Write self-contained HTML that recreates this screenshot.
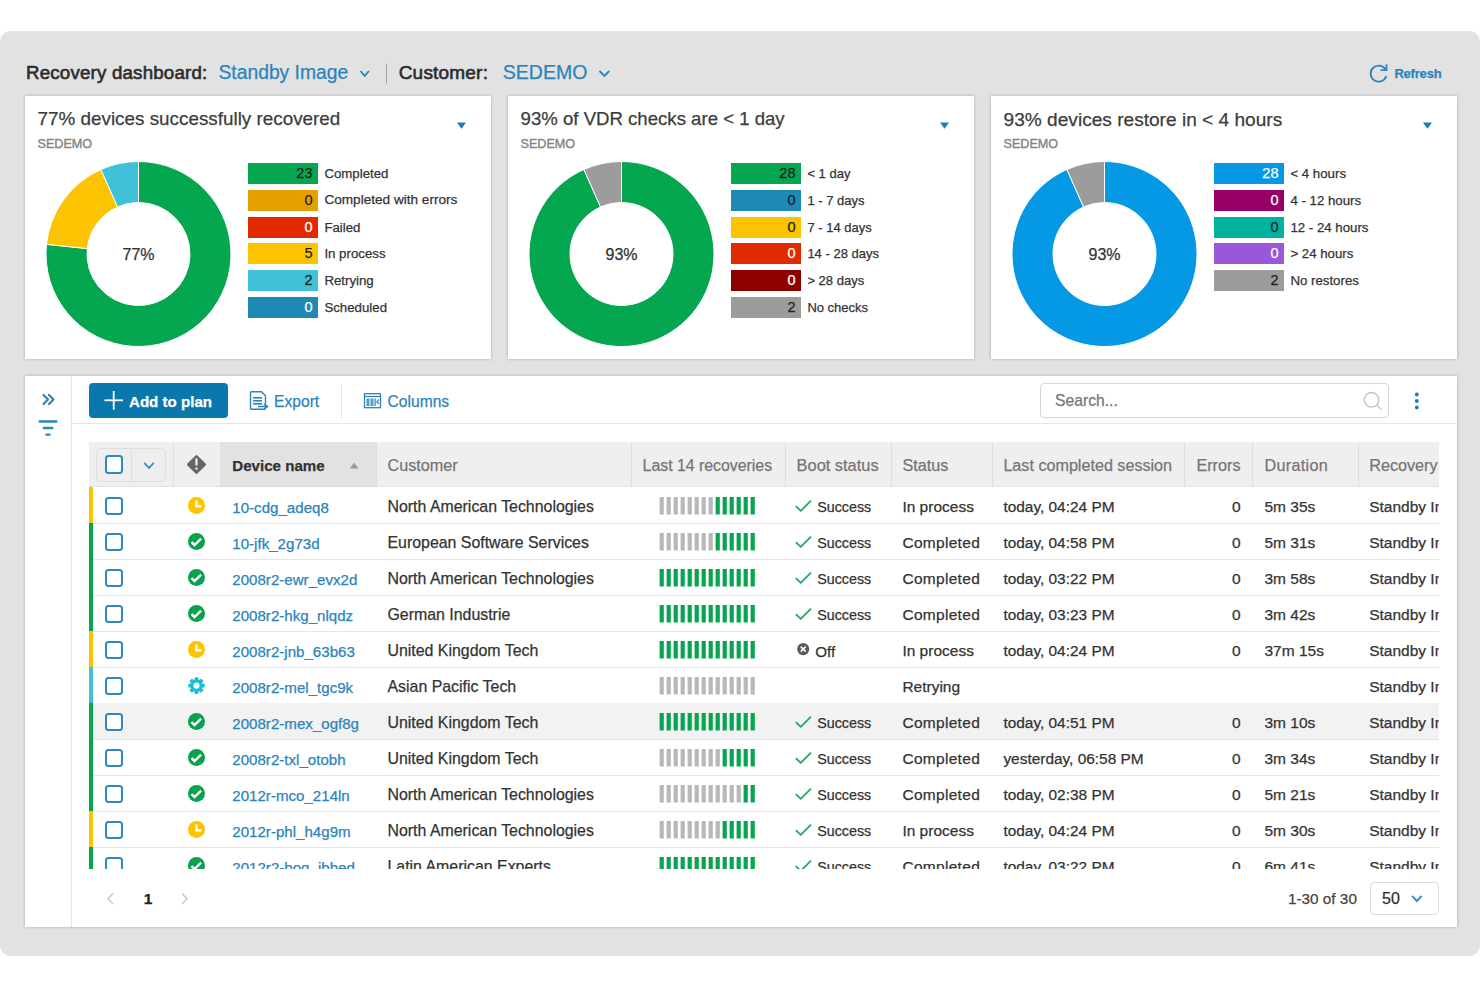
<!DOCTYPE html><html><head><meta charset="utf-8"><style>
html,body{margin:0;padding:0;background:#fff;width:1480px;height:987px;overflow:hidden;font-family:"Liberation Sans",sans-serif;}
.a{position:absolute;box-sizing:border-box}
.t{position:absolute;line-height:1;white-space:nowrap;-webkit-text-stroke:0.25px currentColor}
svg{position:absolute;overflow:visible}
</style></head><body>
<div class="a" style="left:0px;top:31px;width:1480px;height:925px;background:#e2e2e2;border-radius:11px"></div>
<div class="t" style="left:26.0px;top:63.6px;font-size:18.7px;color:#2c2c2c;font-weight:400;-webkit-text-stroke:0.6px #2c2c2c;letter-spacing:0.2px">Recovery dashboard:</div>
<div class="t" style="left:218.5px;top:63.4px;font-size:19.3px;color:#2b84bb;font-weight:400;">Standby Image</div>
<svg style="left:0;top:0" width="1480" height="987"><polyline points="360.5,71 364.7,75.8 369,71" fill="none" stroke="#2b84bb" stroke-width="1.8"/><polyline points="599.5,71 604.4,76 609.3,71" fill="none" stroke="#2b84bb" stroke-width="1.8"/><line x1="386.5" y1="63.5" x2="386.5" y2="83.5" stroke="#a0a0a0" stroke-width="1"/></svg>
<div class="t" style="left:398.7px;top:63.3px;font-size:19.0px;color:#2c2c2c;font-weight:400;-webkit-text-stroke:0.6px #2c2c2c;letter-spacing:0.2px">Customer:</div>
<div class="t" style="left:502.8px;top:63.2px;font-size:19.5px;color:#2b84bb;font-weight:400;">SEDEMO</div>
<svg style="left:0;top:0" width="1480" height="987"><path d="M1385.5,69.5 A8,8 0 1 0 1386.3,76" fill="none" stroke="#2b84bb" stroke-width="1.8"/><path d="M1380.5,70.2 L1386.5,70.2 L1386.5,64.2" fill="none" stroke="#2b84bb" stroke-width="1.8"/></svg>
<div class="t" style="left:1394.4px;top:66.7px;font-size:13px;color:#2b84bb;font-weight:700;letter-spacing:-0.2px">Refresh</div>
<div class="a" style="left:25px;top:96px;width:466px;height:263px;background:#fff;box-shadow:0 0 3px rgba(0,0,0,.25)"></div>
<div class="t" style="left:37.6px;top:109.7px;font-size:18.85px;color:#3c3c3c;font-weight:400;">77% devices successfully recovered</div>
<div class="t" style="left:37.5px;top:137.6px;font-size:12.6px;color:#858585;font-weight:400;-webkit-text-stroke:0.4px #858585">SEDEMO</div>
<div class="t" style="left:38.5px;width:200px;text-align:center;top:247.1px;font-size:16px;color:#333;font-weight:400;">77%</div>
<div class="a" style="left:248px;top:163px;width:70px;height:21px;background:#05a650"></div>
<div class="t" style="right:1167.5px;top:165.9px;font-size:14.5px;color:#222;font-weight:400;">23</div>
<div class="t" style="left:324.4px;top:166.5px;font-size:13.25px;color:#333;font-weight:400;">Completed</div>
<div class="a" style="left:248px;top:190px;width:70px;height:21px;background:#e5a000"></div>
<div class="t" style="right:1167.5px;top:192.9px;font-size:14.5px;color:#222;font-weight:400;">0</div>
<div class="t" style="left:324.4px;top:193.2px;font-size:13.6px;color:#333;font-weight:400;">Completed with errors</div>
<div class="a" style="left:248px;top:217px;width:70px;height:21px;background:#e02b00"></div>
<div class="t" style="right:1167.5px;top:219.9px;font-size:14.5px;color:#fff;font-weight:400;">0</div>
<div class="t" style="left:324.4px;top:220.5px;font-size:13.25px;color:#333;font-weight:400;">Failed</div>
<div class="a" style="left:248px;top:243px;width:70px;height:21px;background:#fcc300"></div>
<div class="t" style="right:1167.5px;top:245.9px;font-size:14.5px;color:#222;font-weight:400;">5</div>
<div class="t" style="left:324.4px;top:246.5px;font-size:13.25px;color:#333;font-weight:400;">In process</div>
<div class="a" style="left:248px;top:270px;width:70px;height:21px;background:#41c1d7"></div>
<div class="t" style="right:1167.5px;top:272.9px;font-size:14.5px;color:#222;font-weight:400;">2</div>
<div class="t" style="left:324.4px;top:273.5px;font-size:13.25px;color:#333;font-weight:400;">Retrying</div>
<div class="a" style="left:248px;top:297px;width:70px;height:21px;background:#1f89b5"></div>
<div class="t" style="right:1167.5px;top:299.9px;font-size:14.5px;color:#fff;font-weight:400;">0</div>
<div class="t" style="left:324.4px;top:300.5px;font-size:13.25px;color:#333;font-weight:400;">Scheduled</div>
<div class="a" style="left:508px;top:96px;width:466px;height:263px;background:#fff;box-shadow:0 0 3px rgba(0,0,0,.25)"></div>
<div class="t" style="left:520.6px;top:110.0px;font-size:18.6px;color:#3c3c3c;font-weight:400;">93% of VDR checks are &lt; 1 day</div>
<div class="t" style="left:520.5px;top:137.6px;font-size:12.6px;color:#858585;font-weight:400;-webkit-text-stroke:0.4px #858585">SEDEMO</div>
<div class="t" style="left:521.5px;width:200px;text-align:center;top:247.1px;font-size:16px;color:#333;font-weight:400;">93%</div>
<div class="a" style="left:731px;top:163px;width:70px;height:21px;background:#05a650"></div>
<div class="t" style="right:684.5px;top:165.9px;font-size:14.5px;color:#222;font-weight:400;">28</div>
<div class="t" style="left:807.4px;top:166.7px;font-size:13.0px;color:#333;font-weight:400;">&lt; 1 day</div>
<div class="a" style="left:731px;top:190px;width:70px;height:21px;background:#1f89b5"></div>
<div class="t" style="right:684.5px;top:192.9px;font-size:14.5px;color:#222;font-weight:400;">0</div>
<div class="t" style="left:807.4px;top:193.7px;font-size:13.0px;color:#333;font-weight:400;">1 - 7 days</div>
<div class="a" style="left:731px;top:217px;width:70px;height:21px;background:#fcc300"></div>
<div class="t" style="right:684.5px;top:219.9px;font-size:14.5px;color:#222;font-weight:400;">0</div>
<div class="t" style="left:807.4px;top:220.7px;font-size:13.0px;color:#333;font-weight:400;">7 - 14 days</div>
<div class="a" style="left:731px;top:243px;width:70px;height:21px;background:#e02b00"></div>
<div class="t" style="right:684.5px;top:245.9px;font-size:14.5px;color:#fff;font-weight:400;">0</div>
<div class="t" style="left:807.4px;top:246.7px;font-size:13.0px;color:#333;font-weight:400;">14 - 28 days</div>
<div class="a" style="left:731px;top:270px;width:70px;height:21px;background:#8e0000"></div>
<div class="t" style="right:684.5px;top:272.9px;font-size:14.5px;color:#fff;font-weight:400;">0</div>
<div class="t" style="left:807.4px;top:273.7px;font-size:13.0px;color:#333;font-weight:400;">&gt; 28 days</div>
<div class="a" style="left:731px;top:297px;width:70px;height:21px;background:#9c9c9c"></div>
<div class="t" style="right:684.5px;top:299.9px;font-size:14.5px;color:#222;font-weight:400;">2</div>
<div class="t" style="left:807.4px;top:300.7px;font-size:13.0px;color:#333;font-weight:400;">No checks</div>
<div class="a" style="left:991px;top:96px;width:466px;height:263px;background:#fff;box-shadow:0 0 3px rgba(0,0,0,.25)"></div>
<div class="t" style="left:1003.6px;top:109.5px;font-size:19.1px;color:#3c3c3c;font-weight:400;">93% devices restore in &lt; 4 hours</div>
<div class="t" style="left:1003.5px;top:137.6px;font-size:12.6px;color:#858585;font-weight:400;-webkit-text-stroke:0.4px #858585">SEDEMO</div>
<div class="t" style="left:1004.5px;width:200px;text-align:center;top:247.1px;font-size:16px;color:#333;font-weight:400;">93%</div>
<div class="a" style="left:1214px;top:163px;width:70px;height:21px;background:#0599e5"></div>
<div class="t" style="right:201.5px;top:165.9px;font-size:14.5px;color:#fff;font-weight:400;">28</div>
<div class="t" style="left:1290.4px;top:166.5px;font-size:13.25px;color:#333;font-weight:400;">&lt; 4 hours</div>
<div class="a" style="left:1214px;top:190px;width:70px;height:21px;background:#990066"></div>
<div class="t" style="right:201.5px;top:192.9px;font-size:14.5px;color:#fff;font-weight:400;">0</div>
<div class="t" style="left:1290.4px;top:193.5px;font-size:13.25px;color:#333;font-weight:400;">4 - 12 hours</div>
<div class="a" style="left:1214px;top:217px;width:70px;height:21px;background:#00b39e"></div>
<div class="t" style="right:201.5px;top:219.9px;font-size:14.5px;color:#222;font-weight:400;">0</div>
<div class="t" style="left:1290.4px;top:220.5px;font-size:13.25px;color:#333;font-weight:400;">12 - 24 hours</div>
<div class="a" style="left:1214px;top:243px;width:70px;height:21px;background:#9b57d9"></div>
<div class="t" style="right:201.5px;top:245.9px;font-size:14.5px;color:#fff;font-weight:400;">0</div>
<div class="t" style="left:1290.4px;top:246.5px;font-size:13.25px;color:#333;font-weight:400;">&gt; 24 hours</div>
<div class="a" style="left:1214px;top:270px;width:70px;height:21px;background:#9c9c9c"></div>
<div class="t" style="right:201.5px;top:272.9px;font-size:14.5px;color:#222;font-weight:400;">2</div>
<div class="t" style="left:1290.4px;top:273.5px;font-size:13.25px;color:#333;font-weight:400;">No restores</div>
<svg style="left:0;top:0" width="1480" height="987"><polygon points="457,122.5 466,122.5 461.5,128.7" fill="#1a7db3"/><path d="M138.50,161.50 A92.5,92.5 0 1 1 46.51,244.33 L87.28,248.62 A51.5,51.5 0 1 0 138.50,202.50 Z" fill="#05a650" stroke="#fff" stroke-width="1"/><path d="M46.51,244.33 A92.5,92.5 0 0 1 100.88,169.50 L117.55,206.95 A51.5,51.5 0 0 0 87.28,248.62 Z" fill="#fcc300" stroke="#fff" stroke-width="1"/><path d="M100.88,169.50 A92.5,92.5 0 0 1 138.50,161.50 L138.50,202.50 A51.5,51.5 0 0 0 117.55,206.95 Z" fill="#41c1d7" stroke="#fff" stroke-width="1"/><polygon points="940,122.5 949,122.5 944.5,128.7" fill="#1a7db3"/><path d="M621.50,161.50 A92.5,92.5 0 1 1 583.88,169.50 L600.55,206.95 A51.5,51.5 0 1 0 621.50,202.50 Z" fill="#05a650" stroke="#fff" stroke-width="1"/><path d="M583.88,169.50 A92.5,92.5 0 0 1 621.50,161.50 L621.50,202.50 A51.5,51.5 0 0 0 600.55,206.95 Z" fill="#9c9c9c" stroke="#fff" stroke-width="1"/><polygon points="1423,122.5 1432,122.5 1427.5,128.7" fill="#1a7db3"/><path d="M1104.50,161.50 A92.5,92.5 0 1 1 1066.88,169.50 L1083.55,206.95 A51.5,51.5 0 1 0 1104.50,202.50 Z" fill="#0599e5" stroke="#fff" stroke-width="1"/><path d="M1066.88,169.50 A92.5,92.5 0 0 1 1104.50,161.50 L1104.50,202.50 A51.5,51.5 0 0 0 1083.55,206.95 Z" fill="#9c9c9c" stroke="#fff" stroke-width="1"/></svg>
<div class="a" style="left:25px;top:376px;width:1432px;height:551px;background:#fff;box-shadow:0 0 3px rgba(0,0,0,.25)"></div>
<div class="a" style="left:71px;top:376px;width:1px;height:551px;background:#e6e6e6"></div>
<div class="a" style="left:72px;top:422.5px;width:1385px;height:1px;background:#e6e6e6"></div>
<div class="a" style="left:89px;top:383px;width:139px;height:35px;background:#0a77ad;border-radius:4px"></div>
<div class="t" style="left:129.0px;top:393.7px;font-size:15.1px;color:#fff;font-weight:700;">Add to plan</div>
<div class="t" style="left:274.1px;top:393.6px;font-size:15.6px;color:#2b84bb;font-weight:400;">Export</div>
<div class="a" style="left:341px;top:384px;width:1px;height:34px;background:#e3e3e3"></div>
<div class="t" style="left:387.6px;top:393.6px;font-size:15.6px;color:#2b84bb;font-weight:400;">Columns</div>
<div class="a" style="left:1040px;top:383px;width:349px;height:35px;border:1px solid #d6d6d6;border-radius:4px;background:#fff"></div>
<div class="t" style="left:1055.0px;top:392.8px;font-size:15.7px;color:#767676;font-weight:400;">Search...</div>
<svg style="left:0;top:0" width="1480" height="987"><polyline points="43.5,395 48,399.5 43.5,404" fill="none" stroke="#2b84bb" stroke-width="2.2" stroke-linecap="round" stroke-linejoin="round"/><polyline points="49,395 53.5,399.5 49,404" fill="none" stroke="#2b84bb" stroke-width="2.2" stroke-linecap="round" stroke-linejoin="round"/><line x1="39.8" y1="421.5" x2="56.3" y2="421.5" stroke="#2b84bb" stroke-width="2.4" stroke-linecap="round"/><line x1="43.8" y1="428" x2="52.3" y2="428" stroke="#2b84bb" stroke-width="2.4" stroke-linecap="round"/><line x1="46.5" y1="434.6" x2="49.5" y2="434.6" stroke="#2b84bb" stroke-width="2.4" stroke-linecap="round"/><line x1="104.5" y1="400.3" x2="123" y2="400.3" stroke="#fff" stroke-width="1.8"/><line x1="113.7" y1="391" x2="113.7" y2="409.7" stroke="#fff" stroke-width="1.8"/><path d="M250.5,391.8 H261.5 L265.5,395.8 V404 M265.5,409.3 H250.5 Z" fill="none" stroke="#2b84bb" stroke-width="1.4"/><path d="M250.5,391.8 V409.3" stroke="#2b84bb" stroke-width="1.4"/><rect x="253" y="397" width="9" height="1.6" fill="#2b84bb"/><rect x="253" y="400" width="9" height="1.6" fill="#2b84bb"/><rect x="253" y="403" width="9" height="1.6" fill="#2b84bb"/><path d="M258,406.5 H266 M264,403.8 L267.5,406.5 L264,409.2" fill="none" stroke="#2b84bb" stroke-width="1.6"/><rect x="364.5" y="393.7" width="16" height="14" fill="none" stroke="#2b84bb" stroke-width="1.3"/><line x1="364.5" y1="396.5" x2="380.5" y2="396.5" stroke="#2b84bb" stroke-width="1.2"/><rect x="366.5" y="398.5" width="3" height="7.5" fill="#2b84bb" opacity=".8"/><rect x="370.5" y="398.5" width="3" height="7.5" fill="#2b84bb" opacity=".8"/><rect x="374.5" y="398.5" width="1.2" height="7.5" fill="#2b84bb"/><polyline points="379,399.5 376.8,401.7 379,404" fill="none" stroke="#2b84bb" stroke-width="1.1"/><circle cx="1371.5" cy="399.8" r="7.3" fill="none" stroke="#c4c4c4" stroke-width="1.4"/><line x1="1376.8" y1="405.2" x2="1381.5" y2="409.5" stroke="#c4c4c4" stroke-width="1.4"/><circle cx="1416.8" cy="394.5" r="1.9" fill="#1a7db3"/><circle cx="1416.8" cy="401" r="1.9" fill="#1a7db3"/><circle cx="1416.8" cy="407.5" r="1.9" fill="#1a7db3"/></svg>
<div class="a" style="left:89px;top:442px;width:1350px;height:45px;background:#efefef;border-bottom:1px solid #e2e2e2"></div>
<div class="a" style="left:220px;top:442px;width:156px;height:45px;background:#e2e2e2;border-bottom:1px solid #dadada"></div>
<div class="a" style="left:173px;top:442px;width:1px;height:45px;background:#dedede"></div>
<div class="a" style="left:376px;top:442px;width:1px;height:45px;background:#dedede"></div>
<div class="a" style="left:631px;top:442px;width:1px;height:45px;background:#dedede"></div>
<div class="a" style="left:785px;top:442px;width:1px;height:45px;background:#dedede"></div>
<div class="a" style="left:891px;top:442px;width:1px;height:45px;background:#dedede"></div>
<div class="a" style="left:992px;top:442px;width:1px;height:45px;background:#dedede"></div>
<div class="a" style="left:1184px;top:442px;width:1px;height:45px;background:#dedede"></div>
<div class="a" style="left:1252px;top:442px;width:1px;height:45px;background:#dedede"></div>
<div class="a" style="left:1358px;top:442px;width:1px;height:45px;background:#dedede"></div>
<div class="a" style="left:95.5px;top:447.5px;width:70px;height:34px;border:1px solid #dedede;border-radius:5px;background:#eeeeee"></div>
<div class="a" style="left:131px;top:448px;width:1px;height:33px;background:#e0e0e0"></div>
<div class="a" style="left:104.7px;top:455.1px;width:18.4px;height:18.9px;border:2.2px solid #2e89bf;border-radius:3.5px;background:#fff"></div>
<svg style="left:0;top:0" width="1480" height="987"><polyline points="144.2,462.8 149,467.8 153.8,462.8" fill="none" stroke="#3a90c4" stroke-width="1.9"/><polygon points="196.5,456.3 204.7,464.5 196.5,472.7 188.3,464.5" fill="#666" stroke="#666" stroke-width="2.6" stroke-linejoin="round"/><rect x="195.5" y="458.5" width="2" height="7" fill="#fff"/><rect x="195.5" y="467.6" width="2" height="2" fill="#fff"/><polygon points="349.7,468.6 358.6,468.6 354.15,462.7" fill="#999"/></svg>
<div class="t" style="left:232.3px;top:458.2px;font-size:15.1px;color:#333;font-weight:700;">Device name</div>
<div class="t" style="left:387.5px;top:457.3px;font-size:16.2px;color:#757575;font-weight:400;">Customer</div>
<div class="t" style="left:642.6px;top:457.6px;font-size:15.85px;color:#757575;font-weight:400;">Last 14 recoveries</div>
<div class="t" style="left:796.6px;top:457.1px;font-size:16.4px;color:#757575;font-weight:400;">Boot status</div>
<div class="t" style="left:902.4px;top:457.3px;font-size:16.2px;color:#757575;font-weight:400;">Status</div>
<div class="t" style="left:1003.4px;top:457.3px;font-size:16.15px;color:#757575;font-weight:400;">Last completed session</div>
<div class="t" style="right:239.5px;top:457.3px;font-size:16.2px;color:#757575;font-weight:400;">Errors</div>
<div class="t" style="left:1264.5px;top:457.3px;font-size:16.2px;color:#757575;font-weight:400;letter-spacing:0.3px">Duration</div>
<div class="t" style="left:1369.2px;top:457.3px;font-size:16.2px;color:#757575;font-weight:400;">Recovery</div>
<div class="a" style="left:89px;top:487px;width:1350px;height:382px;overflow:hidden"><div class="a" style="left:0px;top:0px;width:4px;height:36px;background:#fcc300"></div><div class="a" style="left:4px;top:36px;width:1346px;height:1px;background:#e6e6e6"></div><div class="a" style="left:15.700000000000003px;top:9.6px;width:18.4px;height:18.9px;border:2.2px solid #2e89bf;border-radius:3.5px;background:#fff"></div><div class="t" style="left:143.3px;top:12.7px;font-size:15.1px;color:#2b84bb;font-weight:400;">10-cdg_adeq8</div><div class="t" style="left:298.5px;top:12.0px;font-size:15.9px;color:#333;font-weight:400;">North American Technologies</div><div class="t" style="left:728.2px;top:13.4px;font-size:14.3px;color:#333;font-weight:400;">Success</div><svg style="left:0;top:0" width="1350" height="420"><circle cx="107.5" cy="18.600000000000023" r="8.5" fill="#fcc300"/><polyline points="107.5,13.600000000000023 107.5,19.400000000000023 112.5,19.400000000000023" fill="none" stroke="#fff" stroke-width="2.2"/><rect x="570.6" y="10" width="4.2" height="17.5" fill="#b8b8b8"/><rect x="577.6" y="10" width="4.2" height="17.5" fill="#b8b8b8"/><rect x="584.6" y="10" width="4.2" height="17.5" fill="#b8b8b8"/><rect x="591.6" y="10" width="4.2" height="17.5" fill="#b8b8b8"/><rect x="598.6" y="10" width="4.2" height="17.5" fill="#b8b8b8"/><rect x="605.6" y="10" width="4.2" height="17.5" fill="#b8b8b8"/><rect x="612.6" y="10" width="4.2" height="17.5" fill="#b8b8b8"/><rect x="619.6" y="10" width="4.2" height="17.5" fill="#b8b8b8"/><rect x="626.6" y="10" width="4.2" height="17.5" fill="#06a550"/><rect x="633.6" y="10" width="4.2" height="17.5" fill="#06a550"/><rect x="640.6" y="10" width="4.2" height="17.5" fill="#06a550"/><rect x="647.6" y="10" width="4.2" height="17.5" fill="#06a550"/><rect x="654.6" y="10" width="4.2" height="17.5" fill="#06a550"/><rect x="661.6" y="10" width="4.2" height="17.5" fill="#06a550"/><polyline points="706.8,19.100000000000023 711.8,23.900000000000023 722,13.600000000000023" fill="none" stroke="#21a35c" stroke-width="1.7"/></svg><div class="t" style="left:813.4px;top:12.4px;font-size:15.5px;color:#333;font-weight:400;">In process</div><div class="t" style="left:914.4px;top:12.4px;font-size:15.43px;color:#333;font-weight:400;">today, 04:24 PM</div><div class="t" style="right:198.5px;top:12.4px;font-size:15.5px;color:#333;font-weight:400;">0</div><div class="t" style="left:1175.5px;top:12.4px;font-size:15.5px;color:#333;font-weight:400;">5m 35s</div><div class="t" style="left:1280.2px;top:12.4px;font-size:15.5px;color:#333;font-weight:400;">Standby Image</div><div class="a" style="left:0px;top:36px;width:4px;height:36px;background:#05a650"></div><div class="a" style="left:4px;top:72px;width:1346px;height:1px;background:#e6e6e6"></div><div class="a" style="left:15.700000000000003px;top:45.6px;width:18.4px;height:18.9px;border:2.2px solid #2e89bf;border-radius:3.5px;background:#fff"></div><div class="t" style="left:143.3px;top:48.7px;font-size:15.1px;color:#2b84bb;font-weight:400;">10-jfk_2g73d</div><div class="t" style="left:298.5px;top:48.0px;font-size:15.9px;color:#333;font-weight:400;">European Software Services</div><div class="t" style="left:728.2px;top:49.4px;font-size:14.3px;color:#333;font-weight:400;">Success</div><svg style="left:0;top:0" width="1350" height="420"><circle cx="107.5" cy="54.60000000000002" r="8.5" fill="#08a14e"/><polyline points="102.5,55.200000000000024 105.5,58.00000000000002 112.1,51.60000000000002" fill="none" stroke="#fff" stroke-width="2.4"/><rect x="570.6" y="46" width="4.2" height="17.5" fill="#b8b8b8"/><rect x="577.6" y="46" width="4.2" height="17.5" fill="#b8b8b8"/><rect x="584.6" y="46" width="4.2" height="17.5" fill="#b8b8b8"/><rect x="591.6" y="46" width="4.2" height="17.5" fill="#b8b8b8"/><rect x="598.6" y="46" width="4.2" height="17.5" fill="#b8b8b8"/><rect x="605.6" y="46" width="4.2" height="17.5" fill="#b8b8b8"/><rect x="612.6" y="46" width="4.2" height="17.5" fill="#b8b8b8"/><rect x="619.6" y="46" width="4.2" height="17.5" fill="#b8b8b8"/><rect x="626.6" y="46" width="4.2" height="17.5" fill="#06a550"/><rect x="633.6" y="46" width="4.2" height="17.5" fill="#06a550"/><rect x="640.6" y="46" width="4.2" height="17.5" fill="#06a550"/><rect x="647.6" y="46" width="4.2" height="17.5" fill="#06a550"/><rect x="654.6" y="46" width="4.2" height="17.5" fill="#06a550"/><rect x="661.6" y="46" width="4.2" height="17.5" fill="#06a550"/><polyline points="706.8,55.10000000000002 711.8,59.90000000000002 722,49.60000000000002" fill="none" stroke="#21a35c" stroke-width="1.7"/></svg><div class="t" style="left:813.4px;top:48.4px;font-size:15.5px;color:#333;font-weight:400;letter-spacing:0.3px">Completed</div><div class="t" style="left:914.4px;top:48.4px;font-size:15.43px;color:#333;font-weight:400;">today, 04:58 PM</div><div class="t" style="right:198.5px;top:48.4px;font-size:15.5px;color:#333;font-weight:400;">0</div><div class="t" style="left:1175.5px;top:48.4px;font-size:15.5px;color:#333;font-weight:400;">5m 31s</div><div class="t" style="left:1280.2px;top:48.4px;font-size:15.5px;color:#333;font-weight:400;">Standby Image</div><div class="a" style="left:0px;top:72px;width:4px;height:36px;background:#05a650"></div><div class="a" style="left:4px;top:108px;width:1346px;height:1px;background:#e6e6e6"></div><div class="a" style="left:15.700000000000003px;top:81.6px;width:18.4px;height:18.9px;border:2.2px solid #2e89bf;border-radius:3.5px;background:#fff"></div><div class="t" style="left:143.3px;top:84.7px;font-size:15.1px;color:#2b84bb;font-weight:400;">2008r2-ewr_evx2d</div><div class="t" style="left:298.5px;top:84.0px;font-size:15.9px;color:#333;font-weight:400;">North American Technologies</div><div class="t" style="left:728.2px;top:85.4px;font-size:14.3px;color:#333;font-weight:400;">Success</div><svg style="left:0;top:0" width="1350" height="420"><circle cx="107.5" cy="90.60000000000002" r="8.5" fill="#08a14e"/><polyline points="102.5,91.20000000000002 105.5,94.00000000000003 112.1,87.60000000000002" fill="none" stroke="#fff" stroke-width="2.4"/><rect x="570.6" y="82" width="4.2" height="17.5" fill="#06a550"/><rect x="577.6" y="82" width="4.2" height="17.5" fill="#06a550"/><rect x="584.6" y="82" width="4.2" height="17.5" fill="#06a550"/><rect x="591.6" y="82" width="4.2" height="17.5" fill="#06a550"/><rect x="598.6" y="82" width="4.2" height="17.5" fill="#06a550"/><rect x="605.6" y="82" width="4.2" height="17.5" fill="#06a550"/><rect x="612.6" y="82" width="4.2" height="17.5" fill="#06a550"/><rect x="619.6" y="82" width="4.2" height="17.5" fill="#06a550"/><rect x="626.6" y="82" width="4.2" height="17.5" fill="#06a550"/><rect x="633.6" y="82" width="4.2" height="17.5" fill="#06a550"/><rect x="640.6" y="82" width="4.2" height="17.5" fill="#06a550"/><rect x="647.6" y="82" width="4.2" height="17.5" fill="#06a550"/><rect x="654.6" y="82" width="4.2" height="17.5" fill="#06a550"/><rect x="661.6" y="82" width="4.2" height="17.5" fill="#06a550"/><polyline points="706.8,91.10000000000002 711.8,95.90000000000002 722,85.60000000000002" fill="none" stroke="#21a35c" stroke-width="1.7"/></svg><div class="t" style="left:813.4px;top:84.4px;font-size:15.5px;color:#333;font-weight:400;letter-spacing:0.3px">Completed</div><div class="t" style="left:914.4px;top:84.4px;font-size:15.43px;color:#333;font-weight:400;">today, 03:22 PM</div><div class="t" style="right:198.5px;top:84.4px;font-size:15.5px;color:#333;font-weight:400;">0</div><div class="t" style="left:1175.5px;top:84.4px;font-size:15.5px;color:#333;font-weight:400;">3m 58s</div><div class="t" style="left:1280.2px;top:84.4px;font-size:15.5px;color:#333;font-weight:400;">Standby Image</div><div class="a" style="left:0px;top:108px;width:4px;height:36px;background:#05a650"></div><div class="a" style="left:4px;top:144px;width:1346px;height:1px;background:#e6e6e6"></div><div class="a" style="left:15.700000000000003px;top:117.6px;width:18.4px;height:18.9px;border:2.2px solid #2e89bf;border-radius:3.5px;background:#fff"></div><div class="t" style="left:143.3px;top:120.7px;font-size:15.1px;color:#2b84bb;font-weight:400;">2008r2-hkg_nlqdz</div><div class="t" style="left:298.5px;top:120.0px;font-size:15.9px;color:#333;font-weight:400;">German Industrie</div><div class="t" style="left:728.2px;top:121.4px;font-size:14.3px;color:#333;font-weight:400;">Success</div><svg style="left:0;top:0" width="1350" height="420"><circle cx="107.5" cy="126.60000000000002" r="8.5" fill="#08a14e"/><polyline points="102.5,127.20000000000002 105.5,130.00000000000003 112.1,123.60000000000002" fill="none" stroke="#fff" stroke-width="2.4"/><rect x="570.6" y="118" width="4.2" height="17.5" fill="#06a550"/><rect x="577.6" y="118" width="4.2" height="17.5" fill="#06a550"/><rect x="584.6" y="118" width="4.2" height="17.5" fill="#06a550"/><rect x="591.6" y="118" width="4.2" height="17.5" fill="#06a550"/><rect x="598.6" y="118" width="4.2" height="17.5" fill="#06a550"/><rect x="605.6" y="118" width="4.2" height="17.5" fill="#06a550"/><rect x="612.6" y="118" width="4.2" height="17.5" fill="#06a550"/><rect x="619.6" y="118" width="4.2" height="17.5" fill="#06a550"/><rect x="626.6" y="118" width="4.2" height="17.5" fill="#06a550"/><rect x="633.6" y="118" width="4.2" height="17.5" fill="#06a550"/><rect x="640.6" y="118" width="4.2" height="17.5" fill="#06a550"/><rect x="647.6" y="118" width="4.2" height="17.5" fill="#06a550"/><rect x="654.6" y="118" width="4.2" height="17.5" fill="#06a550"/><rect x="661.6" y="118" width="4.2" height="17.5" fill="#06a550"/><polyline points="706.8,127.10000000000002 711.8,131.90000000000003 722,121.60000000000002" fill="none" stroke="#21a35c" stroke-width="1.7"/></svg><div class="t" style="left:813.4px;top:120.4px;font-size:15.5px;color:#333;font-weight:400;letter-spacing:0.3px">Completed</div><div class="t" style="left:914.4px;top:120.4px;font-size:15.43px;color:#333;font-weight:400;">today, 03:23 PM</div><div class="t" style="right:198.5px;top:120.4px;font-size:15.5px;color:#333;font-weight:400;">0</div><div class="t" style="left:1175.5px;top:120.4px;font-size:15.5px;color:#333;font-weight:400;">3m 42s</div><div class="t" style="left:1280.2px;top:120.4px;font-size:15.5px;color:#333;font-weight:400;">Standby Image</div><div class="a" style="left:0px;top:144px;width:4px;height:36px;background:#fcc300"></div><div class="a" style="left:4px;top:180px;width:1346px;height:1px;background:#e6e6e6"></div><div class="a" style="left:15.700000000000003px;top:153.6px;width:18.4px;height:18.9px;border:2.2px solid #2e89bf;border-radius:3.5px;background:#fff"></div><div class="t" style="left:143.3px;top:156.7px;font-size:15.1px;color:#2b84bb;font-weight:400;">2008r2-jnb_63b63</div><div class="t" style="left:298.5px;top:156.0px;font-size:15.9px;color:#333;font-weight:400;">United Kingdom Tech</div><div class="t" style="left:726.2px;top:156.6px;font-size:15.2px;color:#333;font-weight:400;">Off</div><svg style="left:0;top:0" width="1350" height="420"><circle cx="107.5" cy="162.60000000000002" r="8.5" fill="#fcc300"/><polyline points="107.5,157.60000000000002 107.5,163.40000000000003 112.5,163.40000000000003" fill="none" stroke="#fff" stroke-width="2.2"/><rect x="570.6" y="154" width="4.2" height="17.5" fill="#06a550"/><rect x="577.6" y="154" width="4.2" height="17.5" fill="#06a550"/><rect x="584.6" y="154" width="4.2" height="17.5" fill="#06a550"/><rect x="591.6" y="154" width="4.2" height="17.5" fill="#06a550"/><rect x="598.6" y="154" width="4.2" height="17.5" fill="#06a550"/><rect x="605.6" y="154" width="4.2" height="17.5" fill="#06a550"/><rect x="612.6" y="154" width="4.2" height="17.5" fill="#06a550"/><rect x="619.6" y="154" width="4.2" height="17.5" fill="#06a550"/><rect x="626.6" y="154" width="4.2" height="17.5" fill="#06a550"/><rect x="633.6" y="154" width="4.2" height="17.5" fill="#06a550"/><rect x="640.6" y="154" width="4.2" height="17.5" fill="#06a550"/><rect x="647.6" y="154" width="4.2" height="17.5" fill="#06a550"/><rect x="654.6" y="154" width="4.2" height="17.5" fill="#06a550"/><rect x="661.6" y="154" width="4.2" height="17.5" fill="#06a550"/><circle cx="714.2" cy="162.10000000000002" r="6.1" fill="#5a5a5a"/><path d="M711.7,159.60000000000002 l5,5 M716.7,159.60000000000002 l-5,5" stroke="#fff" stroke-width="1.5"/></svg><div class="t" style="left:813.4px;top:156.4px;font-size:15.5px;color:#333;font-weight:400;">In process</div><div class="t" style="left:914.4px;top:156.4px;font-size:15.43px;color:#333;font-weight:400;">today, 04:24 PM</div><div class="t" style="right:198.5px;top:156.4px;font-size:15.5px;color:#333;font-weight:400;">0</div><div class="t" style="left:1175.5px;top:156.4px;font-size:15.5px;color:#333;font-weight:400;">37m 15s</div><div class="t" style="left:1280.2px;top:156.4px;font-size:15.5px;color:#333;font-weight:400;">Standby Image</div><div class="a" style="left:0px;top:180px;width:4px;height:36px;background:#41c1d7"></div><div class="a" style="left:4px;top:216px;width:1346px;height:1px;background:#e6e6e6"></div><div class="a" style="left:15.700000000000003px;top:189.6px;width:18.4px;height:18.9px;border:2.2px solid #2e89bf;border-radius:3.5px;background:#fff"></div><div class="t" style="left:143.3px;top:192.7px;font-size:15.1px;color:#2b84bb;font-weight:400;">2008r2-mel_tgc9k</div><div class="t" style="left:298.5px;top:192.0px;font-size:15.9px;color:#333;font-weight:400;">Asian Pacific Tech</div><svg style="left:0;top:0" width="1350" height="420"><rect x="105.6" y="190.3" width="3.8" height="5" rx="0.9" fill="#1bbfd3" transform="rotate(0 107.5 198.60000000000002)"/><rect x="105.6" y="190.3" width="3.8" height="5" rx="0.9" fill="#1bbfd3" transform="rotate(45 107.5 198.60000000000002)"/><rect x="105.6" y="190.3" width="3.8" height="5" rx="0.9" fill="#1bbfd3" transform="rotate(90 107.5 198.60000000000002)"/><rect x="105.6" y="190.3" width="3.8" height="5" rx="0.9" fill="#1bbfd3" transform="rotate(135 107.5 198.60000000000002)"/><rect x="105.6" y="190.3" width="3.8" height="5" rx="0.9" fill="#1bbfd3" transform="rotate(180 107.5 198.60000000000002)"/><rect x="105.6" y="190.3" width="3.8" height="5" rx="0.9" fill="#1bbfd3" transform="rotate(225 107.5 198.60000000000002)"/><rect x="105.6" y="190.3" width="3.8" height="5" rx="0.9" fill="#1bbfd3" transform="rotate(270 107.5 198.60000000000002)"/><rect x="105.6" y="190.3" width="3.8" height="5" rx="0.9" fill="#1bbfd3" transform="rotate(315 107.5 198.60000000000002)"/><circle cx="107.5" cy="198.60000000000002" r="6.3" fill="#1bbfd3"/><circle cx="107.5" cy="198.60000000000002" r="3.1" fill="#fff"/><rect x="570.6" y="190" width="4.2" height="17.5" fill="#b8b8b8"/><rect x="577.6" y="190" width="4.2" height="17.5" fill="#b8b8b8"/><rect x="584.6" y="190" width="4.2" height="17.5" fill="#b8b8b8"/><rect x="591.6" y="190" width="4.2" height="17.5" fill="#b8b8b8"/><rect x="598.6" y="190" width="4.2" height="17.5" fill="#b8b8b8"/><rect x="605.6" y="190" width="4.2" height="17.5" fill="#b8b8b8"/><rect x="612.6" y="190" width="4.2" height="17.5" fill="#b8b8b8"/><rect x="619.6" y="190" width="4.2" height="17.5" fill="#b8b8b8"/><rect x="626.6" y="190" width="4.2" height="17.5" fill="#b8b8b8"/><rect x="633.6" y="190" width="4.2" height="17.5" fill="#b8b8b8"/><rect x="640.6" y="190" width="4.2" height="17.5" fill="#b8b8b8"/><rect x="647.6" y="190" width="4.2" height="17.5" fill="#b8b8b8"/><rect x="654.6" y="190" width="4.2" height="17.5" fill="#b8b8b8"/><rect x="661.6" y="190" width="4.2" height="17.5" fill="#b8b8b8"/></svg><div class="t" style="left:813.4px;top:192.4px;font-size:15.5px;color:#333;font-weight:400;">Retrying</div><div class="t" style="left:1280.2px;top:192.4px;font-size:15.5px;color:#333;font-weight:400;">Standby Image</div><div class="a" style="left:4px;top:216px;width:1346px;height:36px;background:#f2f2f2"></div><div class="a" style="left:0px;top:216px;width:4px;height:36px;background:#05a650"></div><div class="a" style="left:4px;top:252px;width:1346px;height:1px;background:#e6e6e6"></div><div class="a" style="left:15.700000000000003px;top:225.6px;width:18.4px;height:18.9px;border:2.2px solid #2e89bf;border-radius:3.5px;background:#fff"></div><div class="t" style="left:143.3px;top:228.7px;font-size:15.1px;color:#2b84bb;font-weight:400;">2008r2-mex_ogf8g</div><div class="t" style="left:298.5px;top:228.0px;font-size:15.9px;color:#333;font-weight:400;">United Kingdom Tech</div><div class="t" style="left:728.2px;top:229.4px;font-size:14.3px;color:#333;font-weight:400;">Success</div><svg style="left:0;top:0" width="1350" height="420"><circle cx="107.5" cy="234.60000000000002" r="8.5" fill="#08a14e"/><polyline points="102.5,235.20000000000002 105.5,238.00000000000003 112.1,231.60000000000002" fill="none" stroke="#fff" stroke-width="2.4"/><rect x="570.6" y="226" width="4.2" height="17.5" fill="#06a550"/><rect x="577.6" y="226" width="4.2" height="17.5" fill="#06a550"/><rect x="584.6" y="226" width="4.2" height="17.5" fill="#06a550"/><rect x="591.6" y="226" width="4.2" height="17.5" fill="#06a550"/><rect x="598.6" y="226" width="4.2" height="17.5" fill="#06a550"/><rect x="605.6" y="226" width="4.2" height="17.5" fill="#06a550"/><rect x="612.6" y="226" width="4.2" height="17.5" fill="#06a550"/><rect x="619.6" y="226" width="4.2" height="17.5" fill="#06a550"/><rect x="626.6" y="226" width="4.2" height="17.5" fill="#06a550"/><rect x="633.6" y="226" width="4.2" height="17.5" fill="#06a550"/><rect x="640.6" y="226" width="4.2" height="17.5" fill="#06a550"/><rect x="647.6" y="226" width="4.2" height="17.5" fill="#06a550"/><rect x="654.6" y="226" width="4.2" height="17.5" fill="#06a550"/><rect x="661.6" y="226" width="4.2" height="17.5" fill="#06a550"/><polyline points="706.8,235.10000000000002 711.8,239.90000000000003 722,229.60000000000002" fill="none" stroke="#21a35c" stroke-width="1.7"/></svg><div class="t" style="left:813.4px;top:228.4px;font-size:15.5px;color:#333;font-weight:400;letter-spacing:0.3px">Completed</div><div class="t" style="left:914.4px;top:228.4px;font-size:15.43px;color:#333;font-weight:400;">today, 04:51 PM</div><div class="t" style="right:198.5px;top:228.4px;font-size:15.5px;color:#333;font-weight:400;">0</div><div class="t" style="left:1175.5px;top:228.4px;font-size:15.5px;color:#333;font-weight:400;">3m 10s</div><div class="t" style="left:1280.2px;top:228.4px;font-size:15.5px;color:#333;font-weight:400;">Standby Image</div><div class="a" style="left:0px;top:252px;width:4px;height:36px;background:#05a650"></div><div class="a" style="left:4px;top:288px;width:1346px;height:1px;background:#e6e6e6"></div><div class="a" style="left:15.700000000000003px;top:261.6px;width:18.4px;height:18.9px;border:2.2px solid #2e89bf;border-radius:3.5px;background:#fff"></div><div class="t" style="left:143.3px;top:264.7px;font-size:15.1px;color:#2b84bb;font-weight:400;">2008r2-txl_otobh</div><div class="t" style="left:298.5px;top:264.0px;font-size:15.9px;color:#333;font-weight:400;">United Kingdom Tech</div><div class="t" style="left:728.2px;top:265.4px;font-size:14.3px;color:#333;font-weight:400;">Success</div><svg style="left:0;top:0" width="1350" height="420"><circle cx="107.5" cy="270.6" r="8.5" fill="#08a14e"/><polyline points="102.5,271.20000000000005 105.5,274.0 112.1,267.6" fill="none" stroke="#fff" stroke-width="2.4"/><rect x="570.6" y="262" width="4.2" height="17.5" fill="#b8b8b8"/><rect x="577.6" y="262" width="4.2" height="17.5" fill="#b8b8b8"/><rect x="584.6" y="262" width="4.2" height="17.5" fill="#b8b8b8"/><rect x="591.6" y="262" width="4.2" height="17.5" fill="#b8b8b8"/><rect x="598.6" y="262" width="4.2" height="17.5" fill="#b8b8b8"/><rect x="605.6" y="262" width="4.2" height="17.5" fill="#b8b8b8"/><rect x="612.6" y="262" width="4.2" height="17.5" fill="#b8b8b8"/><rect x="619.6" y="262" width="4.2" height="17.5" fill="#b8b8b8"/><rect x="626.6" y="262" width="4.2" height="17.5" fill="#b8b8b8"/><rect x="633.6" y="262" width="4.2" height="17.5" fill="#06a550"/><rect x="640.6" y="262" width="4.2" height="17.5" fill="#06a550"/><rect x="647.6" y="262" width="4.2" height="17.5" fill="#06a550"/><rect x="654.6" y="262" width="4.2" height="17.5" fill="#06a550"/><rect x="661.6" y="262" width="4.2" height="17.5" fill="#06a550"/><polyline points="706.8,271.1 711.8,275.90000000000003 722,265.6" fill="none" stroke="#21a35c" stroke-width="1.7"/></svg><div class="t" style="left:813.4px;top:264.4px;font-size:15.5px;color:#333;font-weight:400;letter-spacing:0.3px">Completed</div><div class="t" style="left:914.4px;top:264.4px;font-size:15.43px;color:#333;font-weight:400;">yesterday, 06:58 PM</div><div class="t" style="right:198.5px;top:264.4px;font-size:15.5px;color:#333;font-weight:400;">0</div><div class="t" style="left:1175.5px;top:264.4px;font-size:15.5px;color:#333;font-weight:400;">3m 34s</div><div class="t" style="left:1280.2px;top:264.4px;font-size:15.5px;color:#333;font-weight:400;">Standby Image</div><div class="a" style="left:0px;top:288px;width:4px;height:36px;background:#05a650"></div><div class="a" style="left:4px;top:324px;width:1346px;height:1px;background:#e6e6e6"></div><div class="a" style="left:15.700000000000003px;top:297.6px;width:18.4px;height:18.9px;border:2.2px solid #2e89bf;border-radius:3.5px;background:#fff"></div><div class="t" style="left:143.3px;top:300.7px;font-size:15.1px;color:#2b84bb;font-weight:400;">2012r-mco_214ln</div><div class="t" style="left:298.5px;top:300.0px;font-size:15.9px;color:#333;font-weight:400;">North American Technologies</div><div class="t" style="left:728.2px;top:301.4px;font-size:14.3px;color:#333;font-weight:400;">Success</div><svg style="left:0;top:0" width="1350" height="420"><circle cx="107.5" cy="306.6" r="8.5" fill="#08a14e"/><polyline points="102.5,307.20000000000005 105.5,310.0 112.1,303.6" fill="none" stroke="#fff" stroke-width="2.4"/><rect x="570.6" y="298" width="4.2" height="17.5" fill="#b8b8b8"/><rect x="577.6" y="298" width="4.2" height="17.5" fill="#b8b8b8"/><rect x="584.6" y="298" width="4.2" height="17.5" fill="#b8b8b8"/><rect x="591.6" y="298" width="4.2" height="17.5" fill="#b8b8b8"/><rect x="598.6" y="298" width="4.2" height="17.5" fill="#b8b8b8"/><rect x="605.6" y="298" width="4.2" height="17.5" fill="#b8b8b8"/><rect x="612.6" y="298" width="4.2" height="17.5" fill="#b8b8b8"/><rect x="619.6" y="298" width="4.2" height="17.5" fill="#b8b8b8"/><rect x="626.6" y="298" width="4.2" height="17.5" fill="#b8b8b8"/><rect x="633.6" y="298" width="4.2" height="17.5" fill="#b8b8b8"/><rect x="640.6" y="298" width="4.2" height="17.5" fill="#b8b8b8"/><rect x="647.6" y="298" width="4.2" height="17.5" fill="#b8b8b8"/><rect x="654.6" y="298" width="4.2" height="17.5" fill="#06a550"/><rect x="661.6" y="298" width="4.2" height="17.5" fill="#06a550"/><polyline points="706.8,307.1 711.8,311.90000000000003 722,301.6" fill="none" stroke="#21a35c" stroke-width="1.7"/></svg><div class="t" style="left:813.4px;top:300.4px;font-size:15.5px;color:#333;font-weight:400;letter-spacing:0.3px">Completed</div><div class="t" style="left:914.4px;top:300.4px;font-size:15.43px;color:#333;font-weight:400;">today, 02:38 PM</div><div class="t" style="right:198.5px;top:300.4px;font-size:15.5px;color:#333;font-weight:400;">0</div><div class="t" style="left:1175.5px;top:300.4px;font-size:15.5px;color:#333;font-weight:400;">5m 21s</div><div class="t" style="left:1280.2px;top:300.4px;font-size:15.5px;color:#333;font-weight:400;">Standby Image</div><div class="a" style="left:0px;top:324px;width:4px;height:36px;background:#fcc300"></div><div class="a" style="left:4px;top:360px;width:1346px;height:1px;background:#e6e6e6"></div><div class="a" style="left:15.700000000000003px;top:333.6px;width:18.4px;height:18.9px;border:2.2px solid #2e89bf;border-radius:3.5px;background:#fff"></div><div class="t" style="left:143.3px;top:336.7px;font-size:15.1px;color:#2b84bb;font-weight:400;">2012r-phl_h4g9m</div><div class="t" style="left:298.5px;top:336.0px;font-size:15.9px;color:#333;font-weight:400;">North American Technologies</div><div class="t" style="left:728.2px;top:337.4px;font-size:14.3px;color:#333;font-weight:400;">Success</div><svg style="left:0;top:0" width="1350" height="420"><circle cx="107.5" cy="342.6" r="8.5" fill="#fcc300"/><polyline points="107.5,337.6 107.5,343.40000000000003 112.5,343.40000000000003" fill="none" stroke="#fff" stroke-width="2.2"/><rect x="570.6" y="334" width="4.2" height="17.5" fill="#b8b8b8"/><rect x="577.6" y="334" width="4.2" height="17.5" fill="#b8b8b8"/><rect x="584.6" y="334" width="4.2" height="17.5" fill="#b8b8b8"/><rect x="591.6" y="334" width="4.2" height="17.5" fill="#b8b8b8"/><rect x="598.6" y="334" width="4.2" height="17.5" fill="#b8b8b8"/><rect x="605.6" y="334" width="4.2" height="17.5" fill="#b8b8b8"/><rect x="612.6" y="334" width="4.2" height="17.5" fill="#b8b8b8"/><rect x="619.6" y="334" width="4.2" height="17.5" fill="#b8b8b8"/><rect x="626.6" y="334" width="4.2" height="17.5" fill="#b8b8b8"/><rect x="633.6" y="334" width="4.2" height="17.5" fill="#06a550"/><rect x="640.6" y="334" width="4.2" height="17.5" fill="#06a550"/><rect x="647.6" y="334" width="4.2" height="17.5" fill="#06a550"/><rect x="654.6" y="334" width="4.2" height="17.5" fill="#06a550"/><rect x="661.6" y="334" width="4.2" height="17.5" fill="#06a550"/><polyline points="706.8,343.1 711.8,347.90000000000003 722,337.6" fill="none" stroke="#21a35c" stroke-width="1.7"/></svg><div class="t" style="left:813.4px;top:336.4px;font-size:15.5px;color:#333;font-weight:400;">In process</div><div class="t" style="left:914.4px;top:336.4px;font-size:15.43px;color:#333;font-weight:400;">today, 04:24 PM</div><div class="t" style="right:198.5px;top:336.4px;font-size:15.5px;color:#333;font-weight:400;">0</div><div class="t" style="left:1175.5px;top:336.4px;font-size:15.5px;color:#333;font-weight:400;">5m 30s</div><div class="t" style="left:1280.2px;top:336.4px;font-size:15.5px;color:#333;font-weight:400;">Standby Image</div><div class="a" style="left:0px;top:360px;width:4px;height:36px;background:#05a650"></div><div class="a" style="left:4px;top:396px;width:1346px;height:1px;background:#e6e6e6"></div><div class="a" style="left:15.700000000000003px;top:369.6px;width:18.4px;height:18.9px;border:2.2px solid #2e89bf;border-radius:3.5px;background:#fff"></div><div class="t" style="left:143.3px;top:372.7px;font-size:15.1px;color:#2b84bb;font-weight:400;">2012r2-bog_ibhed</div><div class="t" style="left:298.5px;top:372.0px;font-size:15.9px;color:#333;font-weight:400;">Latin American Experts</div><div class="t" style="left:728.2px;top:373.4px;font-size:14.3px;color:#333;font-weight:400;">Success</div><svg style="left:0;top:0" width="1350" height="420"><circle cx="107.5" cy="378.6" r="8.5" fill="#08a14e"/><polyline points="102.5,379.20000000000005 105.5,382.0 112.1,375.6" fill="none" stroke="#fff" stroke-width="2.4"/><rect x="570.6" y="370" width="4.2" height="17.5" fill="#06a550"/><rect x="577.6" y="370" width="4.2" height="17.5" fill="#06a550"/><rect x="584.6" y="370" width="4.2" height="17.5" fill="#06a550"/><rect x="591.6" y="370" width="4.2" height="17.5" fill="#06a550"/><rect x="598.6" y="370" width="4.2" height="17.5" fill="#06a550"/><rect x="605.6" y="370" width="4.2" height="17.5" fill="#06a550"/><rect x="612.6" y="370" width="4.2" height="17.5" fill="#06a550"/><rect x="619.6" y="370" width="4.2" height="17.5" fill="#06a550"/><rect x="626.6" y="370" width="4.2" height="17.5" fill="#06a550"/><rect x="633.6" y="370" width="4.2" height="17.5" fill="#06a550"/><rect x="640.6" y="370" width="4.2" height="17.5" fill="#06a550"/><rect x="647.6" y="370" width="4.2" height="17.5" fill="#06a550"/><rect x="654.6" y="370" width="4.2" height="17.5" fill="#06a550"/><rect x="661.6" y="370" width="4.2" height="17.5" fill="#06a550"/><polyline points="706.8,379.1 711.8,383.90000000000003 722,373.6" fill="none" stroke="#21a35c" stroke-width="1.7"/></svg><div class="t" style="left:813.4px;top:372.4px;font-size:15.5px;color:#333;font-weight:400;letter-spacing:0.3px">Completed</div><div class="t" style="left:914.4px;top:372.4px;font-size:15.43px;color:#333;font-weight:400;">today, 03:22 PM</div><div class="t" style="right:198.5px;top:372.4px;font-size:15.5px;color:#333;font-weight:400;">0</div><div class="t" style="left:1175.5px;top:372.4px;font-size:15.5px;color:#333;font-weight:400;">6m 41s</div><div class="t" style="left:1280.2px;top:372.4px;font-size:15.5px;color:#333;font-weight:400;">Standby Image</div></div>
<svg style="left:0;top:0" width="1480" height="987"><polyline points="113,893.5 108,898.8 113,904.1" fill="none" stroke="#c4c4c4" stroke-width="1.3"/><polyline points="182,893.5 187,898.8 182,904.1" fill="none" stroke="#c4c4c4" stroke-width="1.3"/><polyline points="1412.2,896 1416.9,901 1421.6,896" fill="none" stroke="#3a8fbd" stroke-width="1.9"/></svg>
<div class="t" style="left:143.8px;top:891.3px;font-size:15.5px;color:#222;font-weight:700;">1</div>
<div class="t" style="left:1288.0px;top:891.4px;font-size:15.3px;color:#444;font-weight:400;">1-30 of 30</div>
<div class="a" style="left:1369.5px;top:881.6px;width:69px;height:33px;border:1px solid #dcdcdc;border-radius:4px"></div>
<div class="t" style="left:1382.1px;top:890.8px;font-size:16px;color:#333;font-weight:400;">50</div>
</body></html>
